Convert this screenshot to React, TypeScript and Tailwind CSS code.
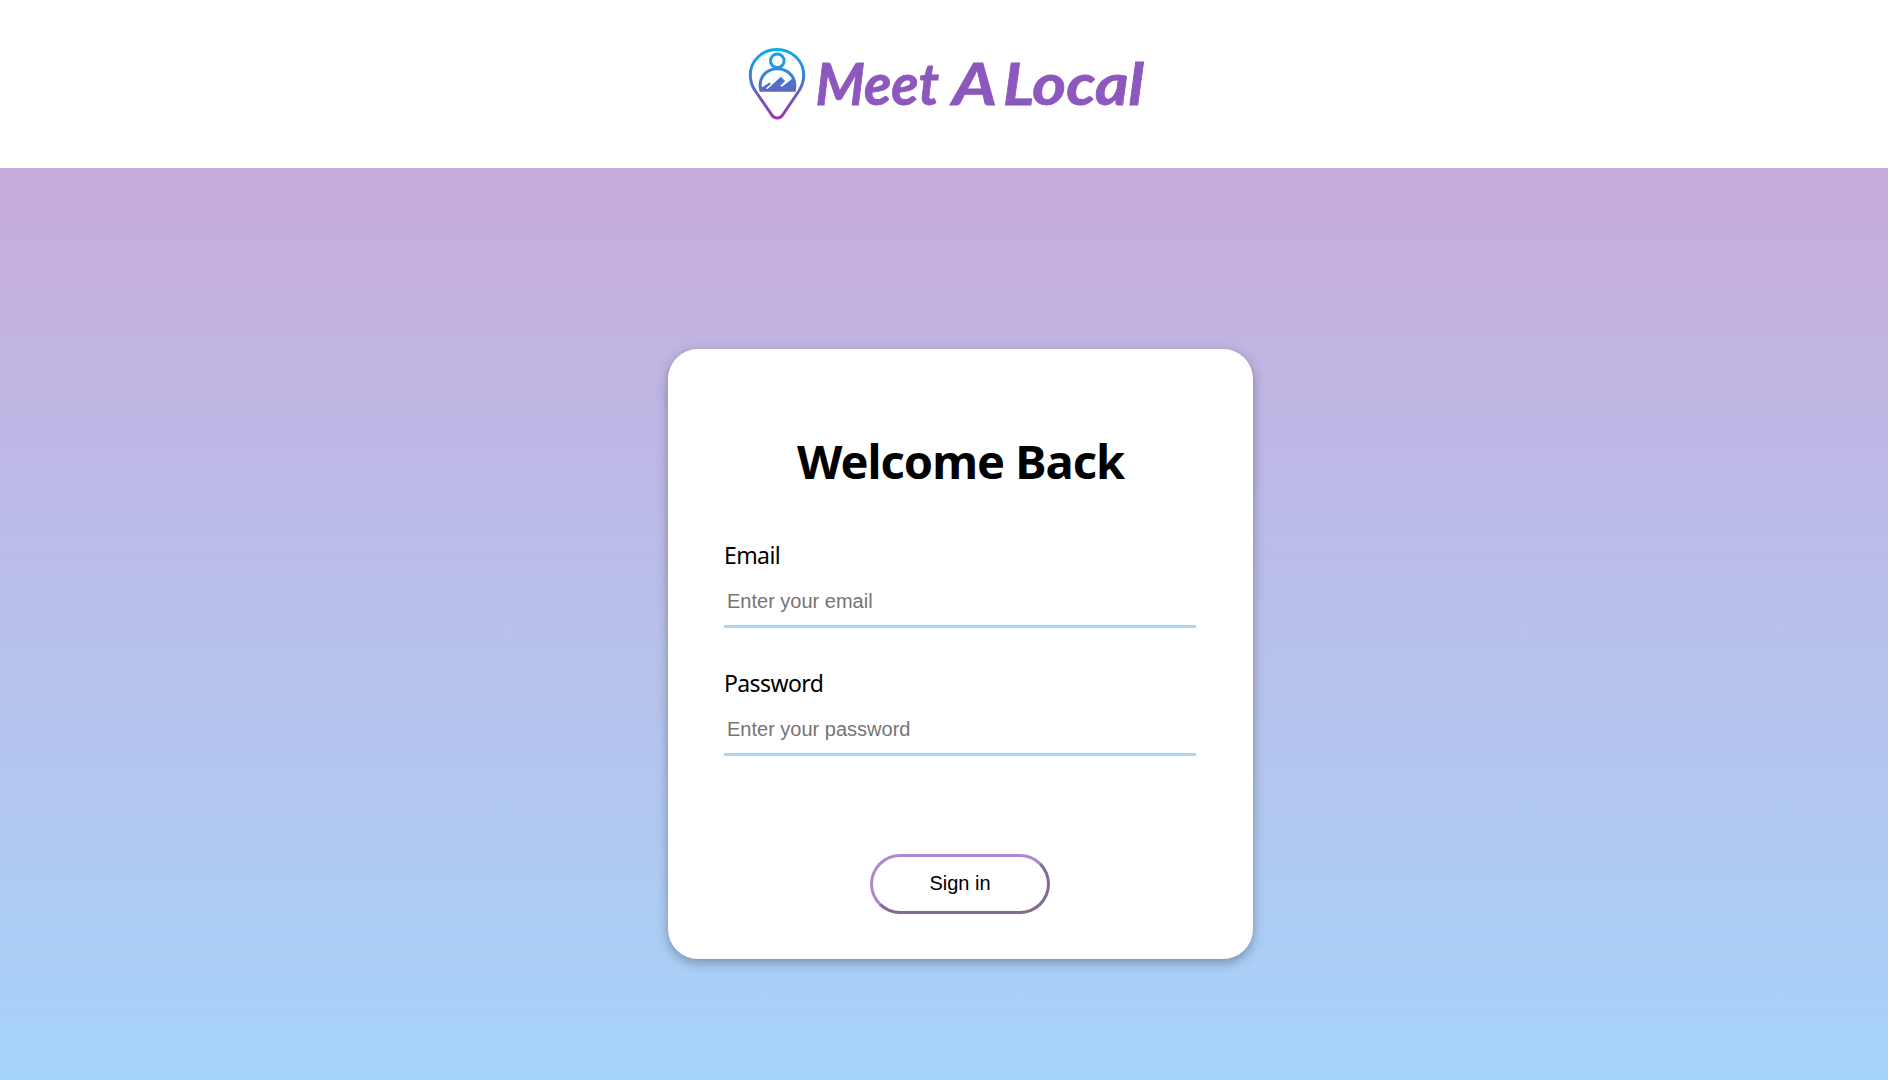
import React from "react";

function PinLogo() {
  return (
    <svg width="400" height="80" viewBox="746 44 400 80" role="img" aria-label="Meet A Local">
      <defs>
        <linearGradient id="pin" gradientUnits="userSpaceOnUse" x1="0" y1="48" x2="0" y2="120">
          <stop offset="0" stopColor="#08aeea" />
          <stop offset="0.5" stopColor="#4e72cb" />
          <stop offset="1" stopColor="#a62fa6" />
        </linearGradient>
      </defs>
      <g fill="none" stroke="url(#pin)" strokeWidth="3" strokeLinejoin="round">
        <path d="M777 49.5C762 49.5 750.3 61 750.3 75C750.3 81 752 86 755 90.5L771.5 114.5C774.5 119.3 780 119.3 783 114.5L799.2 90.5C802 86 803.7 81 803.7 75C803.7 61 792 49.5 777 49.5Z" />
        <circle cx="777.3" cy="60.8" r="6.8" />
        <path d="M761 91C757.5 78 766 68.8 777.3 68.8C788.5 68.8 797.5 78 794 91" />
      </g>
      <path
        fill="url(#pin)"
        d="M759.8 91.8V88L762.5 87L769.5 82.6L771 84L765.8 88.2L767.6 89L780.8 76.7L785.2 81L780.2 85.7L782 86.7L792.5 78.5L795.5 84V91.8Z"
      />
      <g
        className="font-['Lato'] font-bold italic text-[58px]"
        fill="#8d58bd"
        stroke="#8d58bd"
        strokeWidth="0.8"
      >
        <text x="815.5" y="104.5" textLength="123.5" lengthAdjust="spacingAndGlyphs">Meet</text>
        <text x="952.5" y="104.5" textLength="44.5" lengthAdjust="spacingAndGlyphs">A</text>
        <text x="1003" y="104.5" textLength="141" lengthAdjust="spacingAndGlyphs">Local</text>
      </g>
    </svg>
  );
}

interface FieldProps {
  id: string;
  label: string;
  type: string;
  placeholder: string;
}

function Field({ id, label, type, placeholder }: FieldProps) {
  return (
    <div className="flex h-32 flex-col">
      <label htmlFor={id} className="h-[30px] text-[23px] leading-[29px] tracking-[-0.6px]">
        {label}
      </label>
      <input
        id={id}
        type={type}
        placeholder={placeholder}
        className="mt-2.5 h-[47px] w-full border-b-[3px] border-[#a6d5fd] px-[3px] pb-[3px] font-['Liberation_Sans',Arial,sans-serif] text-xl outline-none placeholder:text-[#757575]"
      />
    </div>
  );
}

export default function App() {
  return (
    <div className="flex h-screen flex-col overflow-hidden bg-white font-['Noto_Sans',sans-serif] text-black">
      <header className="flex h-[168px] shrink-0 justify-center bg-white pt-11 pl-1">
        <PinLogo />
      </header>
      <main className="flex flex-1 items-start justify-center bg-linear-to-b from-[#c6abdc] to-[#a6d4fa] pt-[181px] pl-[33px]">
        <form
          className="flex h-[610px] w-[585px] flex-col rounded-[30px] bg-white px-14 pt-20 shadow-[0_4px_12px_rgba(0,0,0,0.3)]"
          onSubmit={(e: React.FormEvent) => e.preventDefault()}
        >
          <h1 className="h-16 text-center text-[47px] leading-[64px] font-bold tracking-[-1px] whitespace-nowrap">
            Welcome Back
          </h1>
          <div className="mt-12 flex w-[472px] flex-col">
            <Field id="email" label="Email" type="email" placeholder="Enter your email" />
            <Field id="password" label="Password" type="password" placeholder="Enter your password" />
          </div>
          <button
            type="submit"
            className="mt-[57px] mr-px h-[60px] w-[180px] self-center rounded-[30px] border-[3px] border-t-[#b088d2] border-r-[#806a96] border-b-[#806a96] border-l-[#b088d2] bg-white pb-0.5 font-['Liberation_Sans',Arial,sans-serif] text-xl"
          >
            Sign in
          </button>
        </form>
      </main>
    </div>
  );
}
